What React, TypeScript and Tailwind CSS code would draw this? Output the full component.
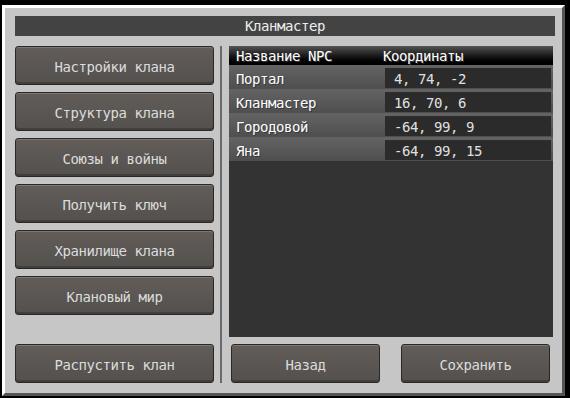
const menu = [
  'Настройки клана',
  'Структура клана',
  'Союзы и войны',
  'Получить ключ',
  'Хранилище клана',
  'Клановый мир',
];

const npcs = [
  { name: 'Портал', pos: '4, 74, -2' },
  { name: 'Кланмастер', pos: '16, 70, 6' },
  { name: 'Городовой', pos: '-64, 99, 9' },
  { name: 'Яна', pos: '-64, 99, 15' },
];

function McButton({ label, className = '' }: { label: string; className?: string }) {
  return (
    <button
      className={`h-[39px] pt-[2px] rounded-[3px] border border-[#2a2725] bg-linear-to-b from-[#625d59] to-[#54504d] shadow-[inset_0_1px_0_#7e7874,inset_0_-2px_0_#423e3b] text-[#dcdcdc] ${className}`}
    >
      {label}
    </button>
  );
}

export default function App() {
  return (
    <div className="w-[570px] h-[398px] bg-black pt-[5px] pl-[2px] font-['DejaVu_Sans_Mono',monospace] text-[14px] tracking-[-0.43px] leading-none">
      <div className="w-[563px] h-[391px] bg-[#c6c6c6] border-[3px] border-t-white border-l-white border-r-[#555555] border-b-[#555555] pl-[10px] pt-[8px]">
        <div className="w-[540px] h-[20px] bg-[#434343] flex items-center justify-center text-[#eeeeee]">
          Кланмастер
        </div>

        <div className="mt-[10px] flex h-[337px]">
          <div className="w-[199px] flex flex-col gap-[7px]">
            {menu.map((m) => (
              <McButton key={m} label={m} />
            ))}
            <McButton label="Распустить клан" className="mt-auto" />
          </div>

          <div className="ml-[6px] w-[2px] h-full bg-[#6a6a6a]" />

          <div className="ml-[7px] w-[324px] flex flex-col">
            <div className="h-[291px] bg-[#333333]">
              <div className="h-[19px] pt-[1px] flex items-center bg-linear-to-b from-[#555555] to-[#000000] text-white [text-shadow:1px_1px_0_#3a3a3a]">
                <span className="w-[154px] pl-[7px]">Название NPC</span>
                <span>Координаты</span>
              </div>
              {npcs.map((n) => (
                <div key={n.name} className="h-[24px] flex bg-linear-to-b from-[#646464] to-[#4e4e4e]">
                  <span className="w-[156px] pl-[7px] pt-[3px] flex items-center text-white [text-shadow:1px_1px_0_#3a3a3a]">
                    {n.name}
                  </span>
                  <span className="mt-[3px] h-[20px] w-[166px] bg-[#2b2b2b] pl-[9px] pt-[1px] flex items-center text-[#e0e0e0]">
                    {n.pos}
                  </span>
                </div>
              ))}
            </div>
            <div className="mt-[7px] pl-[2px] flex gap-[21px]">
              <McButton label="Назад" className="w-[149px]" />
              <McButton label="Сохранить" className="w-[149px]" />
            </div>
          </div>
        </div>
      </div>
    </div>
  );
}
